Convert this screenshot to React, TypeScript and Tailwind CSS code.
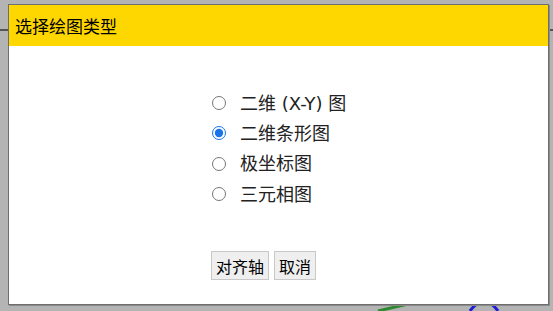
import React, { useState } from 'react';

const options = ['二维 (X-Y) 图', '二维条形图', '极坐标图', '三元相图'];

const font = { fontFamily: '"Noto Sans CJK SC", "Noto Sans", sans-serif' };
const optionFont = { fontFamily: '"DejaVu Sans", "Noto Sans CJK SC", sans-serif' };

export default function App() {
  const [selected, setSelected] = useState(1);

  return (
    <div className="relative w-[553px] h-[311px] overflow-hidden bg-[#b4b4b4] pt-[4px] pl-[8px]" style={font}>
      {/* plot behind the dialog */}
      <svg className="absolute inset-0 w-full h-full" viewBox="0 0 553 311">
        <line x1="0" y1="30" x2="553" y2="30" stroke="#555" strokeWidth="2" />
        <path d="M378 311 L408 304" stroke="#2f8a2f" strokeWidth="3" fill="none" />
        <path d="M470 311 Q484 292 498 311" stroke="#2020d0" strokeWidth="3" fill="none" />
      </svg>

      <div className="relative w-[541px] h-[301px] bg-white border border-[#6e6e6e] shadow-[1px_1px_0_#8a8a8a] flex flex-col">
        <div className="h-[41px] bg-[#ffd700] flex items-center px-[6px] text-[17px] text-black">
          选择绘图类型
        </div>

        <div className="flex-1 flex flex-col pt-[42px] pl-[203px]">
          <div className="flex flex-col">
            {options.map((label, i) => (
              <label
                key={label}
                className="h-[30.3px] flex items-center gap-[14px] text-[18px] text-[#222] cursor-pointer"
                style={optionFont}
              >
                <input
                  type="radio"
                  name="plot"
                  checked={selected === i}
                  onChange={() => setSelected(i)}
                  className="w-[14px] h-[14px] m-0 accent-[#1a73e8]"
                />
                {label}
              </label>
            ))}
          </div>

          <div className="flex gap-[5px] mt-[42px] -ml-[1px]">
            <button className="h-[29px] px-[4px] bg-[#efefef] border border-[#c8c8c8] text-[16px] text-black">
              对齐轴
            </button>
            <button className="h-[29px] px-[4px] bg-[#efefef] border border-[#c8c8c8] text-[16px] text-black">
              取消
            </button>
          </div>
        </div>
      </div>
    </div>
  );
}
